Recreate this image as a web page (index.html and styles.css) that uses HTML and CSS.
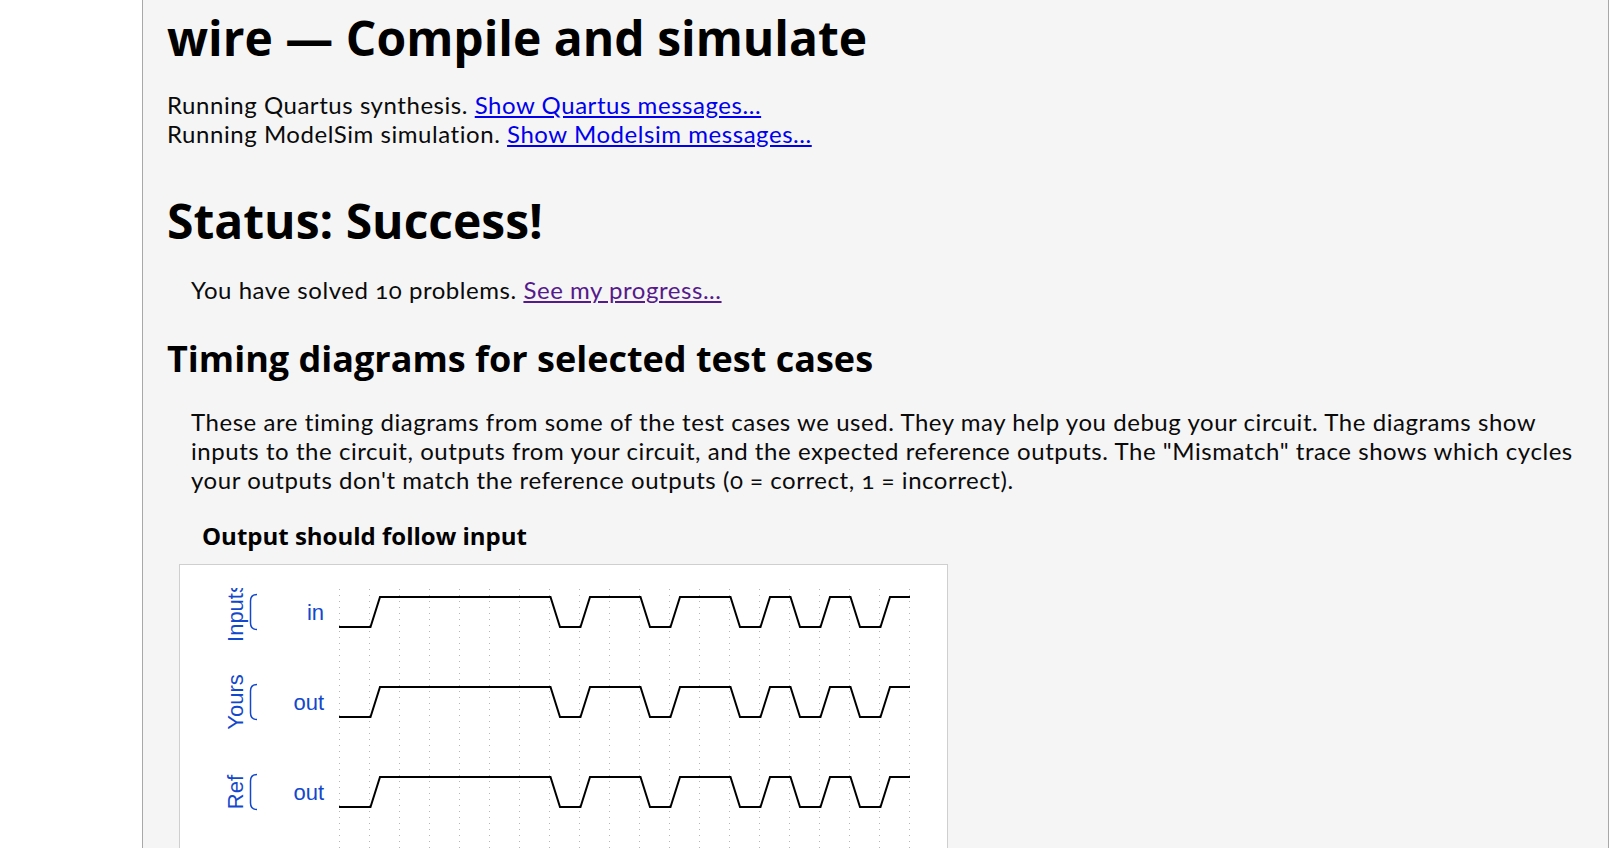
FILE: index.html
```html
<!DOCTYPE html>
<html lang="en">
<head>
<meta charset="utf-8">
<title>wire — Compile and simulate</title>
<link rel="stylesheet" href="styles.css">
</head>
<body>
<div class="page">
  <h1 class="title">wire — Compile and simulate</h1>
  <div class="log">
    Running Quartus synthesis. <a href="#" class="link">Show Quartus messages...</a><br>
    Running ModelSim simulation. <a href="#" class="link">Show Modelsim messages...</a>
  </div>

  <h2 class="status">Status: Success!</h2>
  <p class="solved">You have solved 10 problems. <a href="#" class="link visited">See my progress...</a></p>

  <h3 class="section">Timing diagrams for selected test cases</h3>
  <p class="desc">These are timing diagrams from some of the test cases we used. They may help you debug your circuit. The diagrams show inputs to the circuit, outputs from your circuit, and the expected reference outputs. The "Mismatch" trace shows which cycles your outputs don't match the reference outputs (0 = correct, 1 = incorrect).</p>

  <div class="figure">
    <h4 class="figure-title">Output should follow input</h4>
    <div class="wavebox">
      <svg class="wave" width="766" height="300" viewBox="0 0 766 300">
        <g class="grid">
          <line x1="159.5" y1="1" x2="159.5" y2="300"/>
          <line x1="189.5" y1="1" x2="189.5" y2="300"/>
          <line x1="219.5" y1="1" x2="219.5" y2="300"/>
          <line x1="249.5" y1="1" x2="249.5" y2="300"/>
          <line x1="279.5" y1="1" x2="279.5" y2="300"/>
          <line x1="309.5" y1="1" x2="309.5" y2="300"/>
          <line x1="339.5" y1="1" x2="339.5" y2="300"/>
          <line x1="369.5" y1="1" x2="369.5" y2="300"/>
          <line x1="399.5" y1="1" x2="399.5" y2="300"/>
          <line x1="429.5" y1="1" x2="429.5" y2="300"/>
          <line x1="459.5" y1="1" x2="459.5" y2="300"/>
          <line x1="489.5" y1="1" x2="489.5" y2="300"/>
          <line x1="519.5" y1="1" x2="519.5" y2="300"/>
          <line x1="549.5" y1="1" x2="549.5" y2="300"/>
          <line x1="579.5" y1="1" x2="579.5" y2="300"/>
          <line x1="609.5" y1="1" x2="609.5" y2="300"/>
          <line x1="639.5" y1="1" x2="639.5" y2="300"/>
          <line x1="669.5" y1="1" x2="669.5" y2="300"/>
          <line x1="699.5" y1="1" x2="699.5" y2="300"/>
          <line x1="729.5" y1="1" x2="729.5" y2="300"/>
        </g>

        <g class="labels">
          <text class="group" transform="translate(62.5 24) rotate(-90)">Inputs</text>
          <text class="group" transform="translate(62.5 114) rotate(-90)">Yours</text>
          <text class="group" transform="translate(62.5 204) rotate(-90)">Ref</text>
          <path class="bracket" d="M77 6.5 Q70.5 6.5 70.5 13 V35 Q70.5 41.5 77 41.5"/>
          <path class="bracket" d="M77 96.5 Q70.5 96.5 70.5 103 V125 Q70.5 131.5 77 131.5"/>
          <path class="bracket" d="M77 186.5 Q70.5 186.5 70.5 193 V215 Q70.5 221.5 77 221.5"/>
          <text class="name" x="144" y="32">in</text>
          <text class="name" x="144" y="122">out</text>
          <text class="name" x="144" y="212">out</text>
        </g>

        <g class="traces">
          <path d="M159 39 H190.5 L200 9 H370.5 L380 39 H400.5 L410 9 H460.5 L470 39 H490.5 L500 9 H550.5 L560 39 H580.5 L590 9 H610.5 L620 39 H640.5 L650 9 H670.5 L680 39 H700.5 L710 9 H730"/>
          <path d="M159 129 H190.5 L200 99 H370.5 L380 129 H400.5 L410 99 H460.5 L470 129 H490.5 L500 99 H550.5 L560 129 H580.5 L590 99 H610.5 L620 129 H640.5 L650 99 H670.5 L680 129 H700.5 L710 99 H730"/>
          <path d="M159 219 H190.5 L200 189 H370.5 L380 219 H400.5 L410 189 H460.5 L470 219 H490.5 L500 189 H550.5 L560 219 H580.5 L590 189 H610.5 L620 219 H640.5 L650 189 H670.5 L680 219 H700.5 L710 189 H730"/>
        </g>
      </svg>
    </div>
  </div>
</div>
</body>
</html>
```

FILE: styles.css
```css
html, body {
  margin: 0;
  padding: 0;
  background: #ffffff;
}

body {
  font-family: "Lato", "Open Sans", sans-serif;
  font-size: 24px;
  line-height: 29px;
  letter-spacing: 0.55px;
  font-feature-settings: "onum" 1;
  color: #0a0a0a;
}

.page {
  margin-left: 142px;
  width: 1417px;
  min-height: 100vh;
  padding: 9px 24px 40px 24px;
  background: #f5f5f5;
  border-left: 1px solid #a8a8a8;
  border-right: 1px solid #a8a8a8;
}

.title,
.status,
.section,
.figure-title {
  font-family: "Open Sans", sans-serif;
  font-weight: 700;
  line-height: 1.2;
  letter-spacing: 0;
  color: #000000;
  margin: 0;
}

.title {
  font-size: 48px;
}

.log {
  margin-top: 23px;
}

.link {
  color: #0000ee;
  text-decoration: underline;
}

.link.visited {
  color: #551a8b;
}

.status {
  font-size: 48px;
  margin-top: 44px;
}

.solved {
  margin: 26px 0 0 24px;
}

.section {
  font-size: 36px;
  margin-top: 33px;
}

.desc {
  margin: 27px 0 0 24px;
}

.figure {
  margin: 28px 0 0 12px;
}

.figure-title {
  font-size: 24px;
  padding-left: 23px;
}

.wavebox {
  margin-top: 13px;
  width: 767px;
  background: #ffffff;
  border: 1px solid #cfcfcf;
  padding-top: 23px;
}

.wave {
  display: block;
}

.grid line {
  stroke: #b4b4b4;
  stroke-width: 1;
  stroke-dasharray: 1 5;
}

.traces path {
  fill: none;
  stroke: #000000;
  stroke-width: 2;
  stroke-linejoin: miter;
}

.group,
.name {
  font-family: "Liberation Sans", Arial, sans-serif;
  font-size: 22px;
  letter-spacing: 0;
  fill: #1448cc;
}

.group {
  text-anchor: middle;
}

.name {
  text-anchor: end;
}

.bracket {
  fill: none;
  stroke: #1448cc;
  stroke-width: 1.5;
}
```
